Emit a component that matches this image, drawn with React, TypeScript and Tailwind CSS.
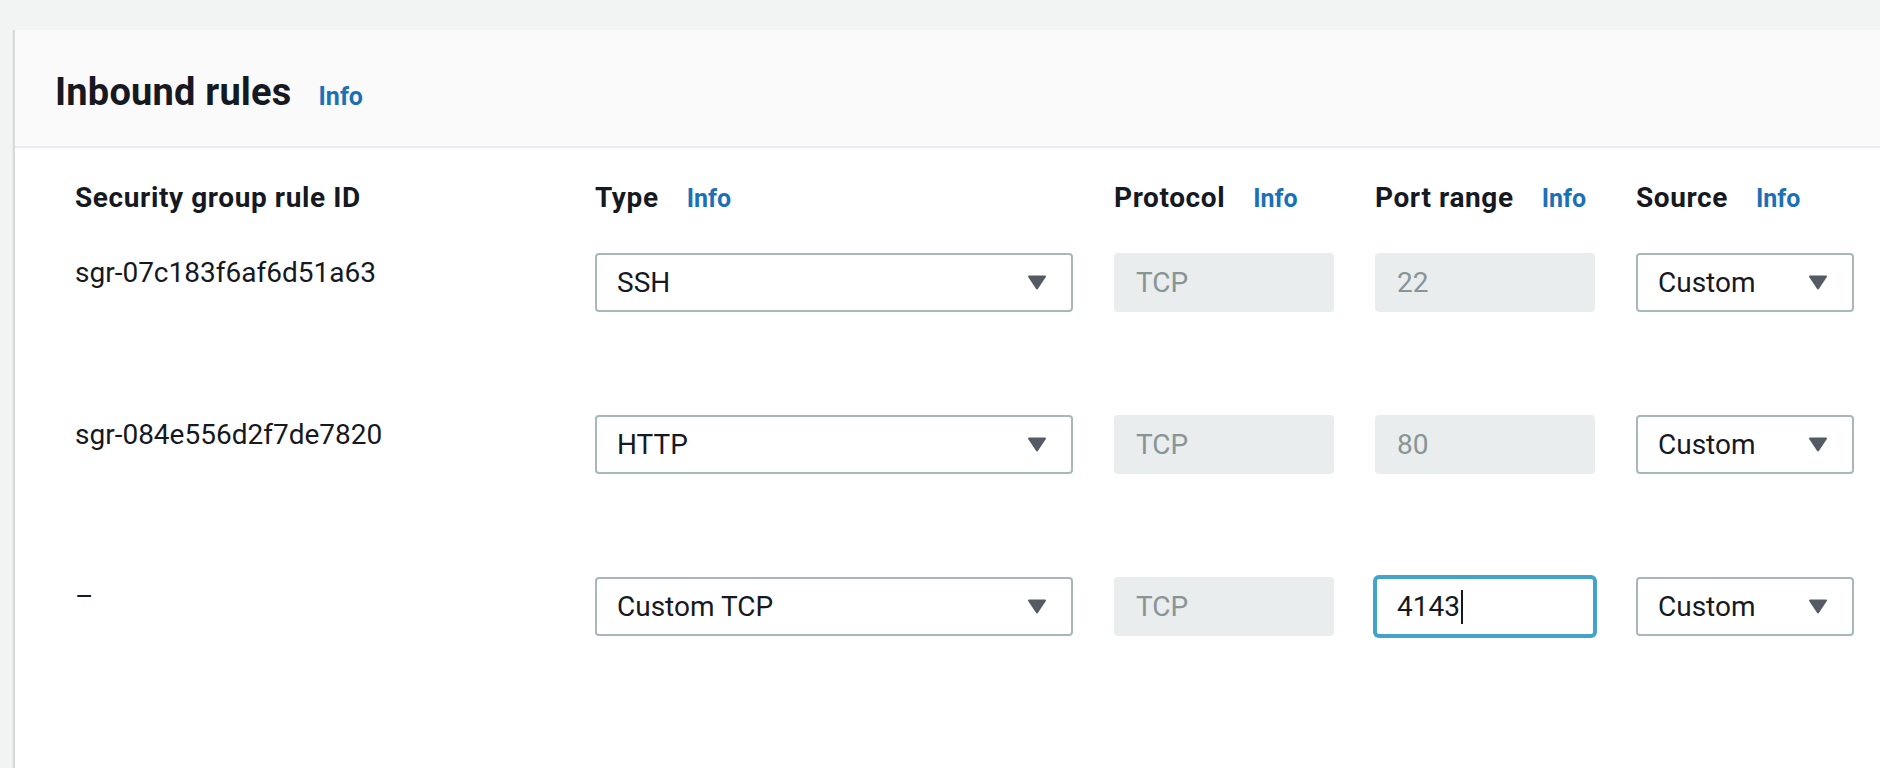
import React from 'react';

type Rule = {
  id: string;
  type: string;
  protocol: string;
  port: string;
  source: string;
  focused?: boolean;
};

const rules: Rule[] = [
  { id: 'sgr-07c183f6af6d51a63', type: 'SSH', protocol: 'TCP', port: '22', source: 'Custom' },
  { id: 'sgr-084e556d2f7de7820', type: 'HTTP', protocol: 'TCP', port: '80', source: 'Custom' },
  { id: '–', type: 'Custom TCP', protocol: 'TCP', port: '4143', source: 'Custom', focused: true },
];

const cols = 'grid grid-cols-[479px_478px_220px_220px_218px] gap-x-[41px]';

const Caret: React.FC = () => (
  <svg width="20" height="15" viewBox="0 0 20 15" className="shrink-0">
    <path d="M2 1.5 H18 L10 13.5 Z" fill="#545b64" stroke="#545b64" strokeWidth="2" strokeLinejoin="round" />
  </svg>
);

const InfoLink: React.FC = () => (
  <span className="text-[25px] font-bold text-[#1c70b7] leading-10">Info</span>
);

const Select: React.FC<{ value: string }> = ({ value }) => (
  <div className="h-[59px] border-2 border-[#aab7b8] rounded-[4px] bg-white flex items-center justify-between pl-5 pr-6">
    <span className="text-[28px] leading-10 text-[#16191f]">{value}</span>
    <Caret />
  </div>
);

const ReadOnly: React.FC<{ value: string }> = ({ value }) => (
  <div className="h-[59px] rounded-[4px] bg-[#eaeded] flex items-center pl-[22px]">
    <span className="text-[28px] leading-10 text-[#879596]">{value}</span>
  </div>
);

const PortInput: React.FC<{ value: string; focused?: boolean }> = ({ value, focused }) => {
  if (!focused) return <ReadOnly value={value} />;
  return (
    <div className="h-[59px] rounded-[4px] bg-white border-2 border-[#44a3ca] shadow-[0_0_0_2px_#44a3ca] flex items-center pl-5">
      <span className="text-[28px] leading-10 text-[#16191f]">{value}</span>
      <span className="inline-block w-[2px] h-[34px] bg-[#16191f] ml-[1px]" />
    </div>
  );
};

const HeaderCell: React.FC<{ label: string; info?: boolean }> = ({ label, info }) => (
  <div className="flex items-baseline gap-7">
    <span className="text-[28px] font-bold leading-10 tracking-[0.6px] text-[#16191f]">{label}</span>
    {info && <InfoLink />}
  </div>
);

export default function App() {
  return (
    <div className="h-[768px] overflow-hidden bg-[#f2f3f3] pt-[30px] pl-[13px] font-['Roboto',sans-serif]">
      <div className="h-[738px] bg-white border-l-2 border-[#d5dbdb] shadow-[0_1px_1px_rgba(0,28,36,0.2)]">
        <div className="h-[118px] bg-[#fafafa] border-b-2 border-[#eaeded] flex items-center pl-10 pt-[8px]">
          <div className="flex items-baseline gap-[27px]">
            <h2 className="text-[38px] font-bold leading-[48px] tracking-[0.2px] text-[#16191f]">Inbound rules</h2>
            <InfoLink />
          </div>
        </div>

        <div className="pl-[60px] pt-[30px]">
          <div className={cols}>
            <HeaderCell label="Security group rule ID" />
            <HeaderCell label="Type" info />
            <HeaderCell label="Protocol" info />
            <HeaderCell label="Port range" info />
            <HeaderCell label="Source" info />
          </div>

          <div className="mt-[34px]">
            {rules.map((r) => (
              <div key={r.id + r.type} className={`${cols} h-[162px] items-start`}>
                <div className="text-[28px] leading-10 text-[#16191f]">{r.id}</div>
                <Select value={r.type} />
                <ReadOnly value={r.protocol} />
                <PortInput value={r.port} focused={r.focused} />
                <Select value={r.source} />
              </div>
            ))}
          </div>
        </div>
      </div>
    </div>
  );
}
